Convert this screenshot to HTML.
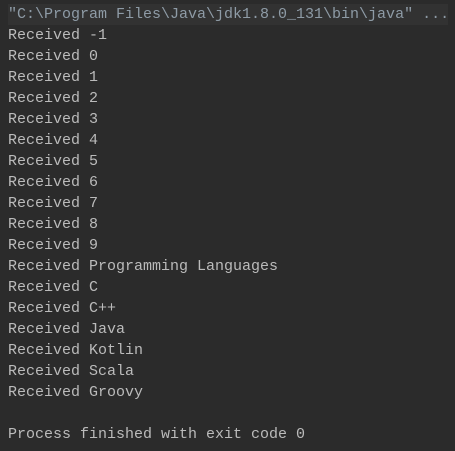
<!DOCTYPE html>
<html><head><style>
html,body{margin:0;padding:0;background:#2b2b2b;width:455px;height:451px;overflow:hidden}
.c{position:absolute;left:8px;top:4px;font-family:"Liberation Mono",monospace;font-size:15px;line-height:21px;color:#bbbbbb;white-space:pre}
.h{background:#323232;color:#8e9ba6;width:440px}
</style></head><body>
<div class="c"><div class="h">"C:\Program Files\Java\jdk1.8.0_131\bin\java" ...</div><div>Received -1</div><div>Received 0</div><div>Received 1</div><div>Received 2</div><div>Received 3</div><div>Received 4</div><div>Received 5</div><div>Received 6</div><div>Received 7</div><div>Received 8</div><div>Received 9</div><div>Received Programming Languages</div><div>Received C</div><div>Received C++</div><div>Received Java</div><div>Received Kotlin</div><div>Received Scala</div><div>Received Groovy</div><div> </div><div>Process finished with exit code 0</div></div>
</body></html>
